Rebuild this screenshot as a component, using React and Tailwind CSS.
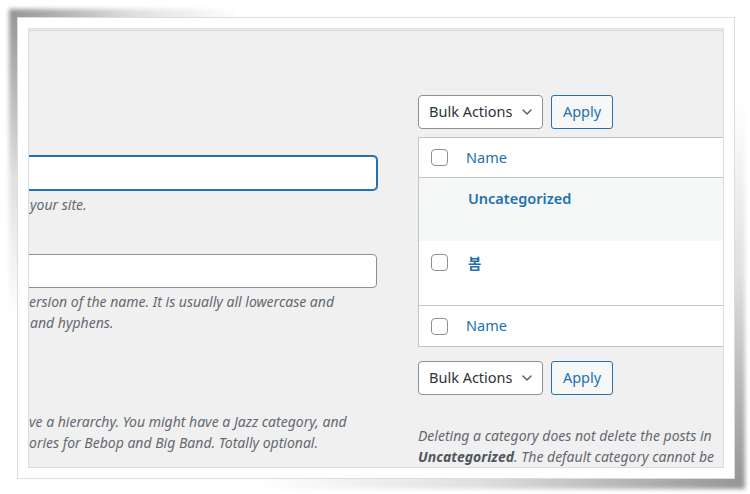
import { ChevronDown } from 'lucide-react';

const font = { fontFamily: '"Noto Sans", "Noto Sans CJK KR", sans-serif' };

function Checkbox({ className = '' }) {
  return <span className={`block w-[17px] h-[17px] shrink-0 rounded-[4px] border border-[#8c8f94] bg-white ${className}`} />;
}

function BulkBar() {
  return (
    <div className="flex gap-[8px]">
      <div className="flex items-center justify-between w-[125px] h-[34px] pl-[10px] pr-[7px] rounded-[4px] border border-[#8c8f94] bg-white text-[14.5px] text-[#2c3338]">
        <span>Bulk Actions</span>
        <ChevronDown size={16} strokeWidth={2} className="text-[#50575e]" />
      </div>
      <button className="w-[62px] h-[34px] rounded-[3px] border border-[#2271b1] bg-[#f6f7f7] text-[14.5px] text-[#2271b1]">
        Apply
      </button>
    </div>
  );
}

export default function App() {
  return (
    <div className="relative w-[750px] h-[494px] bg-white overflow-hidden pt-[17px] pl-[17px]" style={font}>
      {/* curled-paper shadows behind the frame */}
      <div className="absolute left-[9px] top-[9px] w-[230px] h-[310px] blur-[2px] bg-[radial-gradient(farthest-side_at_top_left,rgba(0,0,0,0.42),rgba(0,0,0,0.12)_55%,transparent)]" />
      <div className="absolute right-[5px] bottom-[5px] w-[490px] h-[390px] blur-[2px] bg-[radial-gradient(farthest-side_at_bottom_right,rgba(0,0,0,0.42),rgba(0,0,0,0.12)_55%,transparent)]" />

      <div className="relative w-[718px] h-[462px] border border-[#dcdcde] bg-white p-[10px]">
        <div className="flex flex-col w-[696px] h-[440px] border border-[#dcdcde] bg-[#f0f0f1] overflow-hidden">
          <div className="h-px mt-px bg-[#d0d4d9] shrink-0" />
          <div className="flex">
            {/* left: add category form, cut at the edge */}
            <div className="w-[352px] -ml-[4px] shrink-0 text-[14px] italic leading-[21px] text-[#646970]">
              <div className="mt-[125px] h-[34px] rounded-[4px] border border-[#2271b1] ring-1 ring-[#2271b1] bg-white" />
              <p className="mt-[4px] pl-[5px]">your site.</p>
              <div className="mt-[39px] h-[34px] rounded-[4px] border border-[#8c8f94] bg-white" />
              <p className="mt-[3px] pl-[4px] whitespace-nowrap">ersion of the name. It is usually all lowercase and</p>
              <p className="pl-[5px]">and hyphens.</p>
              <p className="mt-[78px] pl-[4px] whitespace-nowrap">ve a hierarchy. You might have a Jazz category, and</p>
              <p className="pl-[4px] whitespace-nowrap">ories for Bebop and Big Band. Totally optional.</p>
            </div>

            {/* right: category list */}
            <div className="ml-[41px] w-[420px] shrink-0">
              <div className="mt-[64px]">
                <BulkBar />
              </div>
              <div className="mt-[8px] border border-[#c3c4c7] bg-white text-[14.5px]">
                <div className="flex items-center h-[40px] pl-[12px] gap-[18px] border-b border-[#c3c4c7]">
                  <Checkbox />
                  <span className="text-[#2271b1]">Name</span>
                </div>
                <div className="h-[63px] pl-[49px] pt-[10px] bg-[#f6f7f7] leading-[20px]">
                  <span className="font-semibold text-[#2271b1]">Uncategorized</span>
                </div>
                <div className="flex items-start h-[64px] pl-[12px] pt-[12px] gap-[20px] leading-[20px]">
                  <Checkbox className="mt-[1px]" />
                  <span className="font-semibold text-[#2271b1]">봄</span>
                </div>
                <div className="flex items-center h-[41px] pl-[12px] gap-[18px] border-t border-[#c3c4c7]">
                  <Checkbox />
                  <span className="text-[#2271b1]">Name</span>
                </div>
              </div>
              <div className="mt-[14px]">
                <BulkBar />
              </div>
              <p className="mt-[30px] text-[14px] italic leading-[21px] text-[#646970] whitespace-nowrap">
                Deleting a category does not delete the posts in
                <br />
                <strong className="font-bold text-[#50575e]">Uncategorized</strong>. The default category cannot be
              </p>
            </div>
          </div>
        </div>
      </div>
    </div>
  );
}
